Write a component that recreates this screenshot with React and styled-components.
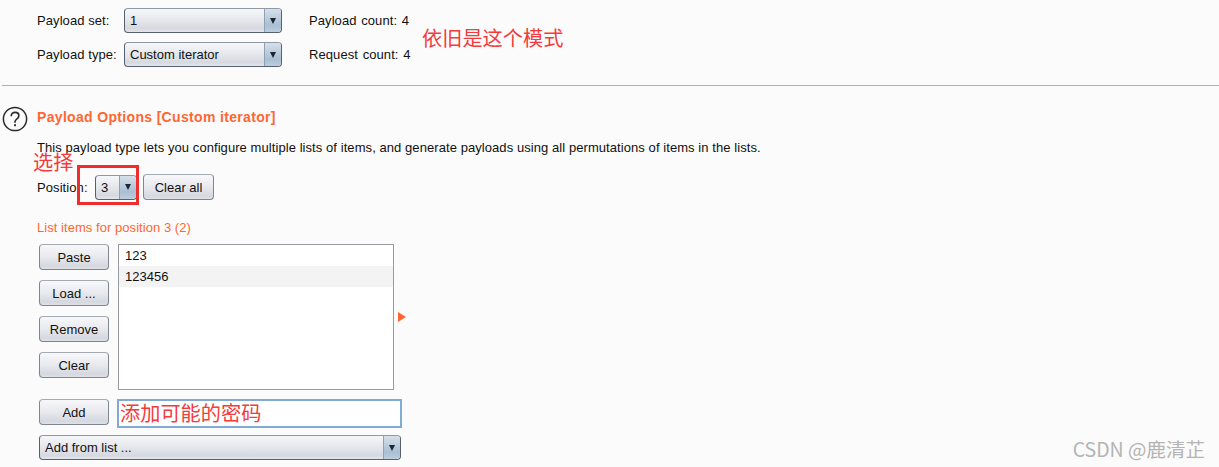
import React from 'react';
import styled, { createGlobalStyle } from 'styled-components';

const GlobalStyle = createGlobalStyle`
    html, body{
        margin: 0;
        background: #fbfbfb;
    }
    body{
        font-family: "Liberation Sans", Arial, sans-serif;
        font-size: 13px;
        color: #111;
    }
`;

const Page = styled.div`
    position: relative;
    width: 1219px;
    height: 467px;
    overflow: hidden;
    background: #fbfbfb;
`;

const TopGrid = styled.div`
    display: grid;
    grid-template-columns: 87px 158px 27px auto;
    grid-auto-rows: 25px;
    row-gap: 9px;
    align-items: center;
    padding: 8px 0 0 37px;
    height: 69px;
    box-sizing: border-box;
    margin-bottom: 16px;
`;

const Label = styled.span`
    letter-spacing: 0.08px;
    white-space: nowrap;
`;

const Count = styled(Label)`
    grid-column: 4;
    word-spacing: 1px;
`;

const Divider = styled.hr`
    border: 0;
    border-top: 1px solid #b0adb8;
    margin: 0 0 0 2px;
    height: 0;
`;

const Heading = styled.div`
    display: flex;
    align-items: center;
    gap: 9px;
    margin: 20px 0 0 2px;
    height: 26px;
`;

const HelpIcon = styled.svg`
    width: 26px;
    height: 26px;
    flex: none;
`;

const Title = styled.h2`
    margin: 0 0 5px;
    font-size: 14px;
    font-weight: 700;
    letter-spacing: 0.33px;
    color: #ff6633;
`;

const Section = styled.div`
    padding-left: 37px;
`;

const Description = styled.p`
    margin: 8px 0 0;
    height: 15px;
    line-height: 15px;
    letter-spacing: 0.07px;
`;

const PositionRow = styled.div`
    display: flex;
    align-items: center;
    margin-top: 19px;
    height: 26px;
`;

const PositionLabel = styled(Label)`
    width: 58px;
`;

const SelectBox = styled.div`
    display: flex;
    align-items: stretch;
    box-sizing: border-box;
    width: ${p => p.$width}px;
    height: 25px;
    border: 1px solid #56606f;
    border-top-color: #8f98a5;
    border-radius: 4px;
    overflow: hidden;
    background: linear-gradient(#f6f7f9, #e6e8ed 45%, #d6d9e0 85%, #e4e6eb);
`;

const SelectValue = styled.span`
    flex: 1;
    padding-left: 5px;
    line-height: 23px;
    white-space: nowrap;
`;

const SelectArrow = styled.span`
    flex: none;
    width: 16px;
    display: flex;
    align-items: center;
    justify-content: center;
    background: linear-gradient(#d6e0ea, #a9bfd4 70%, #bccddd);
    border-left: 1px solid #8ea2b6;
    &::after{
        content: "";
        border-left: 3.5px solid transparent;
        border-right: 3.5px solid transparent;
        border-top: 6px solid #1c2530;
    }
`;

const Button = styled.button`
    box-sizing: border-box;
    width: ${p => p.$width || 70}px;
    height: 26px;
    padding: 0;
    font: inherit;
    color: #111;
    border: 1px solid #7f8690;
    border-top-color: #a5abb3;
    border-radius: 4px;
    background: linear-gradient(#f8f8fa, #e8e9ee 50%, #d5d8df 88%, #dfe1e6);
`;

const ClearAll = styled(Button)`
    margin-left: 6px;
`;

const ListLabel = styled.div`
    margin-top: 20px;
    height: 15px;
    line-height: 15px;
    color: #ff6633;
    letter-spacing: 0.05px;
`;

const ListArea = styled.div`
    display: flex;
    margin: 9px 0 0 2px;
`;

const ButtonColumn = styled.div`
    display: flex;
    flex-direction: column;
    gap: 10px;
    width: 79px;
`;

const ListBox = styled.ul`
    box-sizing: border-box;
    width: 276px;
    height: 146px;
    margin: 0;
    padding: 0;
    list-style: none;
    border: 1px solid #9a9aa2;
    background: #fff;
`;

const ListItem = styled.li`
    height: 21px;
    line-height: 22px;
    padding-left: 6px;
    background: ${p => (p.$shaded ? '#f3f3f3' : '#fff')};
`;

const ExpandArrow = styled.span`
    align-self: center;
    margin: 0 0 0 4px;
    width: 0;
    height: 0;
    border-top: 5px solid transparent;
    border-bottom: 5px solid transparent;
    border-left: 8px solid #ff6633;
`;

const AddRow = styled.div`
    display: flex;
    align-items: flex-start;
    margin: 9px 0 0 2px;
`;

const AddInput = styled.div`
    box-sizing: border-box;
    width: 285px;
    height: 29px;
    margin-left: 8px;
    padding-left: 1px;
    border: 2px solid #82abd3;
    background: #fff;
    display: flex;
    align-items: center;
`;

const FromList = styled.div`
    margin: 7px 0 0 2px;
`;

const RedNote = styled.span`
    font-family: "Noto Sans CJK SC", sans-serif;
    font-size: 20.2px;
    line-height: 1;
    color: #f33b3b;
    white-space: nowrap;
`;

const FloatingNote = styled(RedNote)`
    position: absolute;
    left: ${p => p.$x}px;
    top: ${p => p.$y}px;
`;

const RedFrame = styled.div`
    position: absolute;
    left: 77px;
    top: 165px;
    width: 62px;
    height: 40px;
    box-sizing: border-box;
    border: 3px solid #ee2d2d;
`;

const Watermark = styled.span`
    position: absolute;
    right: 14px;
    top: 438px;
    font-family: "Noto Sans CJK SC", sans-serif;
    font-size: 19.5px;
    line-height: 22px;
    color: #b4b4b4;
    white-space: nowrap;
`;

function App(){
    return (
        <Page>
            <GlobalStyle />
            <TopGrid>
                <Label>Payload set:</Label>
                <SelectBox $width={158}>
                    <SelectValue>1</SelectValue>
                    <SelectArrow />
                </SelectBox>
                <span />
                <Count>Payload count: 4</Count>
                <Label>Payload type:</Label>
                <SelectBox $width={158}>
                    <SelectValue>Custom iterator</SelectValue>
                    <SelectArrow />
                </SelectBox>
                <span />
                <Count>Request count: 4</Count>
            </TopGrid>

            <Divider />

            <Heading>
                <HelpIcon viewBox="0 0 26 26">
                    <circle cx="13" cy="13" r="11.6" fill="none" stroke="#2b2b2b" strokeWidth="1.5" />
                    <path d="M9.2 10.2c0-2.4 1.7-3.8 3.9-3.8s3.8 1.3 3.8 3.3c0 1.7-1 2.5-2.2 3.4-1.1.8-1.7 1.5-1.7 3v.6" fill="none" stroke="#2b2b2b" strokeWidth="1.6" />
                    <rect x="12.1" y="18.2" width="1.9" height="2" fill="#2b2b2b" />
                </HelpIcon>
                <Title>Payload Options [Custom iterator]</Title>
            </Heading>

            <Section>
                <Description>This payload type lets you configure multiple lists of items, and generate payloads using all permutations of items in the lists.</Description>

                <PositionRow>
                    <PositionLabel>Position:</PositionLabel>
                    <SelectBox $width={42}>
                        <SelectValue>3</SelectValue>
                        <SelectArrow />
                    </SelectBox>
                    <ClearAll $width={71}>Clear all</ClearAll>
                </PositionRow>

                <ListLabel>List items for position 3 (2)</ListLabel>

                <ListArea>
                    <ButtonColumn>
                        <Button>Paste</Button>
                        <Button>Load ...</Button>
                        <Button>Remove</Button>
                        <Button>Clear</Button>
                    </ButtonColumn>
                    <ListBox>
                        <ListItem>123</ListItem>
                        <ListItem $shaded>123456</ListItem>
                    </ListBox>
                    <ExpandArrow />
                </ListArea>

                <AddRow>
                    <Button>Add</Button>
                    <AddInput>
                        <RedNote>添加可能的密码</RedNote>
                    </AddInput>
                </AddRow>

                <FromList>
                    <SelectBox $width={362}>
                        <SelectValue>Add from list ...</SelectValue>
                        <SelectArrow />
                    </SelectBox>
                </FromList>
            </Section>

            <FloatingNote $x={422} $y={28}>依旧是这个模式</FloatingNote>
            <FloatingNote $x={33} $y={152}>选择</FloatingNote>
            <RedFrame />
            <Watermark>CSDN @鹿清芷</Watermark>
        </Page>
    )
}

export default App;
